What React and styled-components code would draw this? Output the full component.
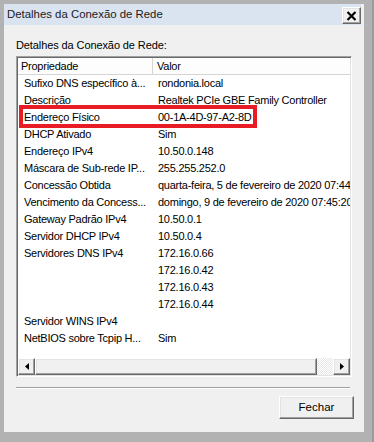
import React from "react";
import styled, { createGlobalStyle } from "styled-components";

const Global = createGlobalStyle`
  html, body { margin: 0; padding: 0; }
  body {
    width: 374px;
    height: 442px;
    overflow: hidden;
    background: #b2b2b2;
    font-family: "Liberation Sans", Arial, sans-serif;
    font-size: 11px;
    color: #000;
  }
`;

const Frame = styled.div`
  box-sizing: border-box;
  width: 374px;
  height: 442px;
  padding: 4px 8px 10px 4px;
  display: flex;
  flex-direction: column;
  background: #b2b2b2;
  border-right: 2px solid #9c9c9c;
`;

const Window = styled.div`
  flex: 1;
  display: flex;
  flex-direction: column;
  background: #f0f0f0;
`;

const TitleBar = styled.div`
  height: 21px;
  margin-right: 3px;
  padding-left: 3px;
  display: flex;
  justify-content: space-between;
  background: #dae4f1;
`;

const Title = styled.span`
  font-size: 11.4px;
  line-height: 21px;
  color: #1a1a1a;
`;

const bevel = `
  box-sizing: border-box;
  background: #f0f0f0;
  border: 1px solid;
  border-color: #ffffff #696969 #696969 #ffffff;
  box-shadow: inset -1px -1px 0 #a0a0a0, inset 1px 1px 0 #e3e3e3;
`;

const CloseButton = styled.div`
  ${bevel}
  width: 19px;
  height: 17px;
  margin-top: 3px;
  display: flex;
  align-items: center;
  justify-content: center;
`;

const Panel = styled.div`
  flex: 1;
  display: flex;
  flex-direction: column;
  padding: 13px 12px 0 12px;
`;

const Label = styled.div`
  height: 14px;
  line-height: 14px;
  white-space: nowrap;
  letter-spacing: -0.1px;
`;

const ListBox = styled.div`
  position: relative;
  box-sizing: border-box;
  margin-top: 4px;
  height: 321px;
  display: flex;
  flex-direction: column;
  background: #fff;
  border: 1px solid;
  border-color: #a0a0a0 #ffffff #ffffff #a0a0a0;
  box-shadow: inset 1px 1px 0 #696969, inset -1px -1px 0 #e3e3e3;
  padding: 1px;
  letter-spacing: -0.25px;
`;

const Header = styled.div`
  display: grid;
  grid-template-columns: 135px 1fr;
  height: 16px;
  border-bottom: 1px solid #d5d5d5;
  background: #fdfdfd;
`;

const HeaderCell = styled.div`
  padding-left: ${(p) => p.$pad}px;
  line-height: 16px;
  border-right: ${(p) => (p.$divider ? "1px solid #d5d5d5" : "none")};
  white-space: nowrap;
`;

const Rows = styled.div`
  flex: 1;
  overflow: hidden;
`;

const Row = styled.div`
  display: grid;
  grid-template-columns: 135px 1fr;
  height: 17px;
  line-height: 17px;
`;

const Cell = styled.div`
  padding-left: ${(p) => p.$pad}px;
  white-space: nowrap;
  overflow: hidden;
`;

const Highlight = styled.div`
  position: absolute;
  box-sizing: border-box;
  left: 2px;
  top: 48px;
  width: 238px;
  height: 23px;
  border: 4px solid #e81c24;
  pointer-events: none;
`;

const ScrollBar = styled.div`
  display: flex;
  height: 17px;
`;

const ScrollButton = styled.div`
  ${bevel}
  width: 17px;
  height: 17px;
  display: flex;
  align-items: center;
  justify-content: center;
`;

const Thumb = styled.div`
  ${bevel}
  width: 282px;
  height: 17px;
`;

const Track = styled.div`
  flex: 1;
  background-color: #ffffff;
  background-image: repeating-conic-gradient(#ffffff 0 25%, #e6e6e6 0 50%);
  background-size: 2px 2px;
`;

const Separator = styled.div`
  margin-top: 10px;
  margin-right: 2px;
  border-top: 1px solid #a0a0a0;
  border-bottom: 1px solid #ffffff;
`;

const ButtonRow = styled.div`
  display: flex;
  justify-content: flex-end;
  margin-top: 7px;
  margin-right: -2px;
`;

const PushButton = styled.div`
  ${bevel}
  width: 75px;
  height: 23px;
  line-height: 21px;
  text-align: center;
  font-size: 11.5px;
  color: #000;
`;

const rows = [
  ["Sufixo DNS específico à...", "rondonia.local"],
  ["Descrição", "Realtek PCIe GBE Family Controller"],
  ["Endereço Físico", "00-1A-4D-97-A2-8D"],
  ["DHCP Ativado", "Sim"],
  ["Endereço IPv4", "10.50.0.148"],
  ["Máscara de Sub-rede IP...", "255.255.252.0"],
  ["Concessão Obtida", "quarta-feira, 5 de fevereiro de 2020 07:44:13"],
  ["Vencimento da Concess...", "domingo, 9 de fevereiro de 2020 07:45:20"],
  ["Gateway Padrão IPv4", "10.50.0.1"],
  ["Servidor DHCP IPv4", "10.50.0.4"],
  ["Servidores DNS IPv4", "172.16.0.66"],
  ["", "172.16.0.42"],
  ["", "172.16.0.43"],
  ["", "172.16.0.44"],
  ["Servidor WINS IPv4", ""],
  ["NetBIOS sobre Tcpip H...", "Sim"],
];

const CloseIcon = () => (
  <svg width="11" height="10" viewBox="0 0 11 10">
    <path d="M1.5 1 L9.5 9 M9.5 1 L1.5 9" stroke="#000" strokeWidth="2.2" />
  </svg>
);

const Arrow = ({ dir }) => (
  <svg width="4" height="7" viewBox="0 0 4 7">
    {dir === "left" ? (
      <path d="M4 0 L0 3.5 L4 7 Z" fill="#000" />
    ) : (
      <path d="M0 0 L4 3.5 L0 7 Z" fill="#000" />
    )}
  </svg>
);

export default function App() {
  return (
    <>
      <Global />
      <Frame>
        <Window>
          <TitleBar>
            <Title>Detalhes da Conexão de Rede</Title>
            <CloseButton>
              <CloseIcon />
            </CloseButton>
          </TitleBar>
          <Panel>
            <Label>Detalhes da Conexão de Rede:</Label>
            <ListBox>
              <Header>
                <HeaderCell $pad={3} $divider>
                  Propriedade
                </HeaderCell>
                <HeaderCell $pad={4}>Valor</HeaderCell>
              </Header>
              <Rows>
                {rows.map(([k, v], i) => (
                  <Row key={i}>
                    <Cell $pad={6}>{k}</Cell>
                    <Cell $pad={5}>{v}</Cell>
                  </Row>
                ))}
              </Rows>
              <ScrollBar>
                <ScrollButton>
                  <Arrow dir="left" />
                </ScrollButton>
                <Thumb />
                <Track />
                <ScrollButton>
                  <Arrow dir="right" />
                </ScrollButton>
              </ScrollBar>
              <Highlight />
            </ListBox>
            <Separator />
            <ButtonRow>
              <PushButton>Fechar</PushButton>
            </ButtonRow>
          </Panel>
        </Window>
      </Frame>
    </>
  );
}
